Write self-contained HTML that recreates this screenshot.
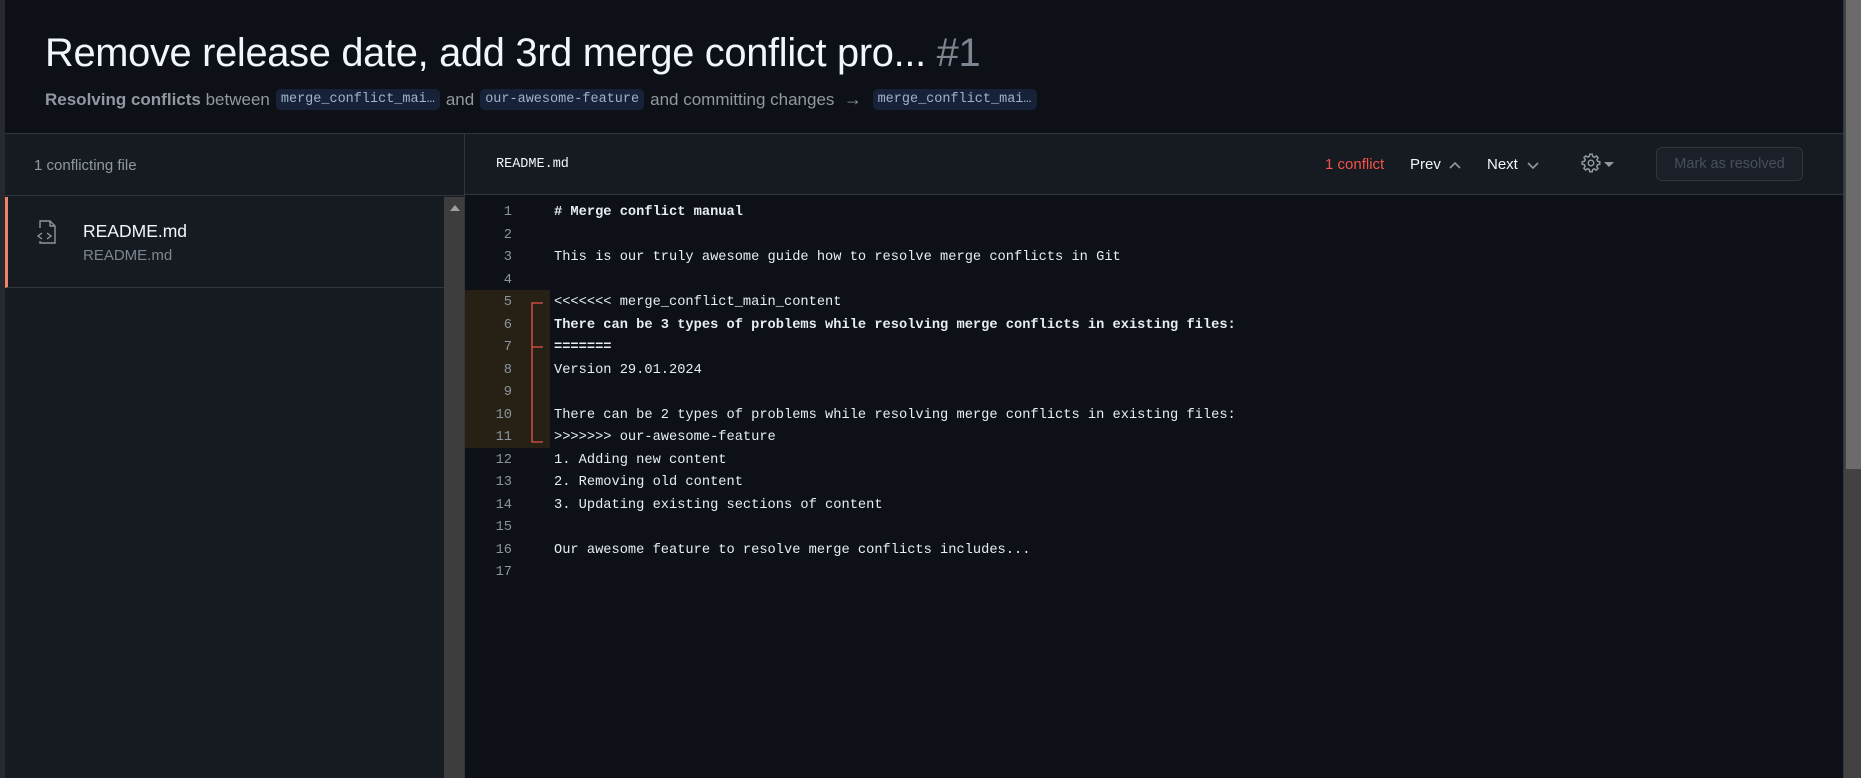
<!DOCTYPE html>
<html><head><meta charset="utf-8"><style>
*{box-sizing:border-box;margin:0;padding:0}
body{width:1861px;height:778px;background:#0d1117;overflow:hidden;position:relative;font-family:"Liberation Sans",sans-serif;color:#e6edf3}
.abs{position:absolute}
.strip{left:0;top:0;width:5px;height:778px;background:#26292e}
.title{left:45px;top:31px;font-size:39.8px;color:#f0f6fc;white-space:nowrap;letter-spacing:-0.3px}
.title span{color:#7d8590}
.sub{left:45px;top:89px;font-size:17px;color:#9198a1;white-space:nowrap;display:flex;align-items:center}
.sub b{color:#9198a1}
.pill{font-family:"Liberation Mono",monospace;font-size:13.5px;background:#172238;color:#9fb2cc;padding:3px 5px;border-radius:5px;margin:0 6px}
.hb{left:5px;top:133px;width:1838px;height:1px;background:#30363d}
.side{left:5px;top:134px;width:460px;height:644px;background:#161b22}
.sidehead{left:5px;top:134px;width:460px;height:62px;border-bottom:1px solid #30363d;font-size:15px;color:#9198a1;padding:23px 0 0 29px}
.item{left:5px;top:197px;width:439px;height:91px;border-left:3px solid #f0836a;border-bottom:1px solid #30363d}
.sbar{left:444px;top:197px;width:21px;height:581px;background:#3d3d3d}
.vline{left:464px;top:134px;width:1px;height:644px;background:#30363d}
.tool{left:465px;top:134px;width:1378px;height:61px;background:#161b22;border-bottom:1px solid #30363d}
.rs{left:1843px;top:0;width:18px;height:778px;background:#424242;border-left:1px solid #30363d}
.rthumb{left:1846px;top:0;width:15px;height:469px;background:#6b6b6b}
.code{left:465px;top:202px;font-family:"Liberation Mono",monospace;font-size:13.7px;line-height:22.5px}
.ln{display:flex;height:22.5px;white-space:pre}
.num{width:47px;text-align:right;color:#8b949e}
.txt{position:absolute;left:89px;color:#e6edf3}
.cf{left:465px;top:290px;width:85px;height:158px;background:#272115}
</style></head><body>
<div class="abs strip"></div>
<div class="abs title">Remove release date, add 3rd merge conflict pro... <span>#1</span></div>
<div class="abs sub"><b>Resolving conflicts</b>&nbsp;between <span class="pill">merge_conflict_mai…</span> and <span class="pill">our-awesome-feature</span> and committing changes &nbsp;<span style="color:#9198a1;font-size:18px">→</span>&nbsp;<span class="pill">merge_conflict_mai…</span></div>
<div class="abs hb"></div>
<div class="abs side"></div>
<div class="abs sidehead">1 conflicting file</div>
<div class="abs item">
 <svg class="abs" style="left:28px;top:22px" width="22" height="26" viewBox="0 0 22 26" fill="none" stroke="#8b949e" stroke-width="1.4"><path d="M4 9V2h10l5 5v17H4v-2"/><path d="M14 2v5h5"/><path d="M6 14l-4 3 4 3M11 14l4 3-4 3"/></svg>
 <div class="abs" style="left:75px;top:24px;font-size:17.5px;color:#f0f6fc">README.md</div>
 <div class="abs" style="left:75px;top:50px;font-size:15px;color:#7d8590">README.md</div>
</div>
<div class="abs sbar"><div style="width:0;height:0;margin:8px auto;border-left:5px solid transparent;border-right:5px solid transparent;border-bottom:6px solid #a0a0a0"></div></div>
<div class="abs vline"></div>
<div class="abs tool">
 <div class="abs" style="left:31px;top:23px;font-family:'Liberation Mono',monospace;font-size:13.5px;color:#f0f6fc">README.md</div>
 <div class="abs" style="left:860px;top:22px;font-size:15px;color:#f85149">1 conflict</div>
 <div class="abs" style="left:945px;top:22px;font-size:15px;color:#f0f6fc">Prev</div>
 <svg class="abs" style="left:983px;top:26px" width="14" height="10" viewBox="0 0 14 10"><path d="M2 8l5-5 5 5" stroke="#9198a1" stroke-width="1.6" fill="none"/></svg>
 <div class="abs" style="left:1022px;top:22px;font-size:15px;color:#f0f6fc">Next</div>
 <svg class="abs" style="left:1061px;top:27px" width="14" height="10" viewBox="0 0 14 10"><path d="M2 2l5 5 5-5" stroke="#9198a1" stroke-width="1.6" fill="none"/></svg>
 <svg class="abs" style="left:1116px;top:19px" width="20" height="20" viewBox="0 0 16 16" fill="none" stroke="#9198a1" stroke-width="1.2"><circle cx="8" cy="8" r="2.2"/><path d="M7 1h2l.4 1.8 1.3.6 1.6-1 1.4 1.4-1 1.6.6 1.3L15 7v2l-1.8.4-.6 1.3 1 1.6-1.4 1.4-1.6-1-1.3.6L9 15H7l-.4-1.8-1.3-.6-1.6 1-1.4-1.4 1-1.6-.6-1.3L1 9V7l1.8-.4.6-1.3-1-1.6 1.4-1.4 1.6 1 1.3-.6z"/></svg>
 <div class="abs" style="left:1139px;top:28px;border-left:5px solid transparent;border-right:5px solid transparent;border-top:5px solid #9198a1"></div>
 <div class="abs" style="left:1191px;top:13px;width:147px;height:34px;border:1px solid #30363d;border-radius:6px;background:#1b2028;color:#484f58;font-size:14.5px;text-align:center;line-height:32px">Mark as resolved</div>
</div>
<div class="abs cf"></div>
<svg class="abs" style="left:528px;top:302px" width="20" height="142" viewBox="0 0 20 142" fill="none" stroke="#e5534b" stroke-width="1.3"><path d="M15 1H4v139h11M4 45h11"/></svg>
<div class="abs code">
<div class="ln"><span class="num">1</span><span class="txt"><b># Merge conflict manual</b></span></div>
<div class="ln"><span class="num">2</span></div>
<div class="ln"><span class="num">3</span><span class="txt">This is our truly awesome guide how to resolve merge conflicts in Git</span></div>
<div class="ln"><span class="num">4</span></div>
<div class="ln"><span class="num">5</span><span class="txt">&lt;&lt;&lt;&lt;&lt;&lt;&lt; merge_conflict_main_content</span></div>
<div class="ln"><span class="num">6</span><span class="txt"><b>There can be 3 types of problems while resolving merge conflicts in existing files:</b></span></div>
<div class="ln"><span class="num">7</span><span class="txt"><b>=======</b></span></div>
<div class="ln"><span class="num">8</span><span class="txt">Version 29.01.2024</span></div>
<div class="ln"><span class="num">9</span></div>
<div class="ln"><span class="num">10</span><span class="txt">There can be 2 types of problems while resolving merge conflicts in existing files:</span></div>
<div class="ln"><span class="num">11</span><span class="txt">&gt;&gt;&gt;&gt;&gt;&gt;&gt; our-awesome-feature</span></div>
<div class="ln"><span class="num">12</span><span class="txt">1. Adding new content</span></div>
<div class="ln"><span class="num">13</span><span class="txt">2. Removing old content</span></div>
<div class="ln"><span class="num">14</span><span class="txt">3. Updating existing sections of content</span></div>
<div class="ln"><span class="num">15</span></div>
<div class="ln"><span class="num">16</span><span class="txt">Our awesome feature to resolve merge conflicts includes...</span></div>
<div class="ln"><span class="num">17</span></div>
</div>
<div class="abs rs"></div>
<div class="abs rthumb"></div>
</body></html>
